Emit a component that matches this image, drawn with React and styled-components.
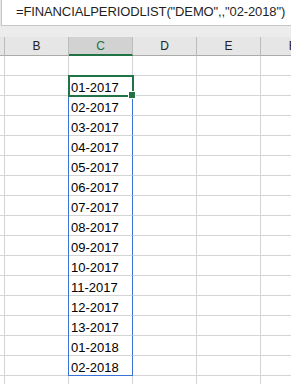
import React from 'react'
import styled, { css, createGlobalStyle } from 'styled-components'

const GlobalStyle = createGlobalStyle`
  html, body {
    margin: 0;
    padding: 0;
    background: #ffffff;
  }
`

const Sheet = styled.div`
  width: 291px;
  height: 384px;
  overflow: hidden;
  background: #ffffff;
  font-family: "Liberation Sans", Arial, sans-serif;
`

const FormulaRow = styled.div`
  height: 26px;
  padding-left: 1px;
  background: #e6e6e6;
`

const FormulaBox = styled.div`
  height: 26px;
  box-sizing: border-box;
  background: #ffffff;
  border-left: 1px solid #c6c6c6;
  border-bottom: 1px solid #c6c6c6;
  padding-left: 14px;
  font-size: 13px;
  letter-spacing: -0.12px;
  line-height: 24px;
  color: #1f1f1f;
  white-space: nowrap;
`

const Gap = styled.div`
  height: 11px;
  background: #ececec;
`

const Grid = styled.div`
  display: grid;
  grid-template-columns: 5px repeat(5, 64px);
  grid-template-rows: 19px;
  grid-auto-rows: 20px;
`

const HeadCell = styled.div`
  box-sizing: border-box;
  display: flex;
  align-items: center;
  justify-content: center;
  background: ${p => (p.$active ? '#d2d2d2' : '#e6e6e6')};
  border-right: 1px solid #bcbcbc;
  border-bottom: ${p => (p.$active ? '2px solid #217346' : '1px solid #ababab')};
  font-size: 12px;
  color: ${p => (p.$active ? '#217346' : '#222222')};
  padding-top: ${p => (p.$active ? '1px' : '0')};
  white-space: nowrap;
  overflow: hidden;
`

const Cell = styled.div`
  box-sizing: border-box;
  display: flex;
  align-items: flex-end;
  border-right: 1px solid #d4d4d4;
  border-bottom: 1px solid #d4d4d4;
  padding-left: 2px;
  font-size: 13px;
  line-height: 15px;
  color: #000000;
  white-space: nowrap;

  ${p => p.$inRange && css`
    border-right-color: #3a72d6;
    box-shadow: -1px 0 0 #3a72d6;
  `}

  ${p => p.$last && css`
    border-bottom-color: #3a72d6;
  `}

  ${p => p.$selected && css`
    position: relative;
    z-index: 1;
    outline: 2px solid #217346;
    outline-offset: -1px;

    &::after {
      content: '';
      position: absolute;
      right: -4px;
      bottom: -4px;
      width: 6px;
      height: 6px;
      background: #217346;
      border: 1px solid #ffffff;
    }
  `}
`

const columns = ['A', 'B', 'C', 'D', 'E', 'F']

const periods = [
  '01-2017', '02-2017', '03-2017', '04-2017', '05-2017', '06-2017', '07-2017',
  '08-2017', '09-2017', '10-2017', '11-2017', '12-2017', '13-2017', '01-2018', '02-2018',
]

const rows = [null, ...periods, null]

export default function App() {
  return (
    <Sheet>
      <GlobalStyle />
      <FormulaRow>
        <FormulaBox>=FINANCIALPERIODLIST("DEMO",,"02-2018")</FormulaBox>
      </FormulaRow>
      <Gap />
      <Grid>
        {columns.map(c => (
          <HeadCell key={c} $active={c === 'C'}>{c === 'A' ? '' : c}</HeadCell>
        ))}
        {rows.map((value, r) =>
          columns.map(c => {
            const inRange = c === 'C' && !!value
            return (
              <Cell
                key={`${c}${r}`}
                $inRange={inRange}
                $last={inRange && r === periods.length}
                $selected={inRange && r === 1}
              >
                {inRange ? value : ''}
              </Cell>
            )
          })
        )}
      </Grid>
    </Sheet>
  )
}
